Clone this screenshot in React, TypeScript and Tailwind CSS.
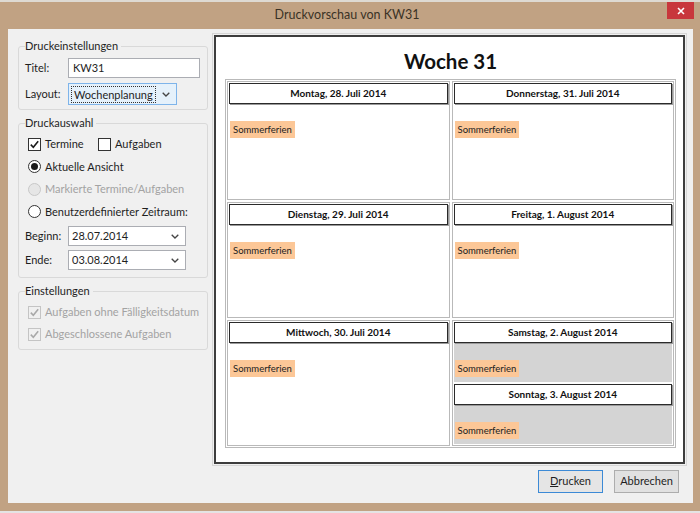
import React from 'react';

const ui = "font-['Lato',sans-serif]";
const doc = "font-['Lato',sans-serif]";

function Chevron() {
  return (
    <svg width="8" height="5" viewBox="0 0 8 5">
      <path d="M0.7 0.7 L4 4 L7.3 0.7" stroke="#444" strokeWidth="1.3" fill="none" />
    </svg>
  );
}

function Check({ checked = false, disabled = false }: { checked?: boolean; disabled?: boolean }) {
  return (
    <span
      className={`flex h-[13px] w-[13px] shrink-0 items-center justify-center border ${
        disabled ? 'border-[#c4c4c4] bg-[#f0f0f0]' : 'border-[#333] bg-white'
      }`}
    >
      {checked && (
        <svg width="11" height="11" viewBox="0 0 11 11">
          <path
            d="M1.8 5.6 L4.3 8.2 L9.2 2.2"
            stroke={disabled ? '#a8a8a8' : '#1a1a1a'}
            strokeWidth="1.6"
            fill="none"
          />
        </svg>
      )}
    </span>
  );
}

function Radio({ checked = false, disabled = false }: { checked?: boolean; disabled?: boolean }) {
  return (
    <span
      className={`flex h-[13px] w-[13px] shrink-0 items-center justify-center rounded-full border ${
        disabled ? 'border-[#c8c8c8] bg-[#e6e6e6]' : 'border-[#333] bg-white'
      }`}
    >
      {checked && <span className="h-[7px] w-[7px] rounded-full bg-[#1a1a1a]" />}
    </span>
  );
}

function DateBox({ label, value }: { label: string; value: string }) {
  return (
    <div className="flex items-center whitespace-nowrap">
      <span className="w-[43px]">{label}</span>
      <div className="flex h-[20px] w-[118px] items-center justify-between border border-[#abadb3] bg-white pl-[3px] pr-[6px]">
        <span>{value}</span>
        <Chevron />
      </div>
    </div>
  );
}

function Tag() {
  return (
    <div className={`${doc} ml-[1px] w-fit bg-[#fcc797] px-[3px] text-[9.5px] leading-[17px] text-[#222]`}>
      Sommerferien
    </div>
  );
}

function DayHead({ text }: { text: string }) {
  return (
    <div
      className={`${doc} flex h-[21px] shrink-0 items-center justify-center border border-[#2a2a2a] bg-white text-[10px] font-bold text-[#111] shadow-[1px_1px_0_#9a9a9a]`}
    >
      {text}
    </div>
  );
}

function Day({ text }: { text: string }) {
  return (
    <div className="flex flex-col border border-[#b9b9b9] p-px">
      <DayHead text={text} />
      <div className="mt-[17px]">
        <Tag />
      </div>
    </div>
  );
}

const days = [
  'Montag, 28. Juli 2014',
  'Donnerstag, 31. Juli 2014',
  'Dienstag, 29. Juli 2014',
  'Freitag, 1. August 2014',
  'Mittwoch, 30. Juli 2014',
];

export default function App() {
  return (
    <div className={`${ui} flex h-[513px] w-[700px] flex-col bg-[#c1a283] text-[11px] text-[#1e1e1e]`}>
      <div className="h-[2px] bg-[#dedad3]" />
      {/* title bar */}
      <div className="flex h-[27px] items-start">
        <div className="flex-1" />
        <div className="pt-[4px] text-[12.5px] leading-[18px] text-[#3a3226]">Druckvorschau von KW31</div>
        <div className="flex flex-1 justify-end pr-[6px]">
          <div className="flex h-[17px] w-[27px] items-center justify-center bg-[#c8373c]">
            <svg width="8" height="8" viewBox="0 0 8 8">
              <path d="M1 1 L7 7 M7 1 L1 7" stroke="#fff" strokeWidth="1.6" />
            </svg>
          </div>
        </div>
      </div>

      {/* client area */}
      <div className="ml-[8px] mr-[7px] flex h-[474px] flex-col bg-[#f0f0f0]">
        <div className="flex items-start pt-[4px]">
          {/* left settings column */}
          <div className="flex w-[204px] shrink-0 flex-col gap-[5px] whitespace-nowrap pl-[10px] pr-[4px] pt-[5px]">
            <fieldset className="rounded-[3px] border border-[#d9d9d9] px-[6px] pb-[4px]">
              <legend className="pr-[3px] leading-[16px]">Druckeinstellungen</legend>
              <div className="mt-[4px] flex items-center">
                <span className="w-[43px]">Titel:</span>
                <div className="flex h-[20px] w-[132px] items-center border border-[#abadb3] bg-white pl-[4px]">
                  KW31
                </div>
              </div>
              <div className="mt-[5px] flex items-center">
                <span className="w-[43px]">Layout:</span>
                <div className="flex h-[22px] w-[109px] items-center justify-between border border-[#7eb4ea] bg-[#e5f1fb] pl-[2px] pr-[6px]">
                  <span className="border border-dotted border-[#333] px-[2px] leading-[15px]">Wochenplanung</span>
                  <Chevron />
                </div>
              </div>
            </fieldset>

            <fieldset className="rounded-[3px] border border-[#d9d9d9] px-[6px] pb-[7px]">
              <legend className="pr-[3px] leading-[16px]">Druckauswahl</legend>
              <div className="mt-[2px] flex h-[22.5px] items-center pl-[3px]">
                <div className="flex w-[70px] items-center gap-[4px]">
                  <Check checked />
                  <span>Termine</span>
                </div>
                <div className="flex items-center gap-[4px]">
                  <Check />
                  <span>Aufgaben</span>
                </div>
              </div>
              <div className="flex h-[22.5px] items-center gap-[4px] pl-[3px]">
                <Radio checked />
                <span>Aktuelle Ansicht</span>
              </div>
              <div className="flex h-[22.5px] items-center gap-[4px] pl-[3px] text-[#a3a3a3]">
                <Radio disabled />
                <span>Markierte Termine/Aufgaben</span>
              </div>
              <div className="flex h-[22.5px] items-center gap-[4px] pl-[3px]">
                <Radio />
                <span>Benutzerdefinierter Zeitraum:</span>
              </div>
              <div className="mt-[3px]">
                <DateBox label="Beginn:" value="28.07.2014" />
              </div>
              <div className="mt-[4px]">
                <DateBox label="Ende:" value="03.08.2014" />
              </div>
            </fieldset>

            <fieldset className="rounded-[3px] border border-[#d9d9d9] px-[6px] pb-[4px]">
              <legend className="pr-[3px] leading-[16px]">Einstellungen</legend>
              <div className="mt-[2px] flex h-[22px] items-center gap-[4px] pl-[3px] text-[#a3a3a3]">
                <Check checked disabled />
                <span>Aufgaben ohne Fälligkeitsdatum</span>
              </div>
              <div className="flex h-[22px] items-center gap-[4px] pl-[3px] text-[#a3a3a3]">
                <Check checked disabled />
                <span>Abgeschlossene Aufgaben</span>
              </div>
            </fieldset>
          </div>

          {/* preview */}
          <div className="mr-[6px] flex-1 border border-[#d6d6d6] p-px">
            <div className="border-2 border-[#3d3d3d] bg-white pb-[14px] pl-[9px] pr-[7px]">
              <div className={`${doc} pt-[12px] text-center text-[20.5px] font-bold leading-[24px] text-[#111]`}>
                Woche 31
              </div>
              <div className="mt-[6px] grid grid-cols-2 grid-rows-[119px_116px_126px] gap-[2px] border border-[#b9b9b9] p-px">
                {days.map((d) => (
                  <Day key={d} text={d} />
                ))}
                <div className="flex flex-col gap-[2px] border border-[#b9b9b9] p-px">
                  <div className="flex flex-1 flex-col bg-[#d4d4d4]">
                    <DayHead text="Samstag, 2. August 2014" />
                    <div className="mt-[17px]">
                      <Tag />
                    </div>
                  </div>
                  <div className="flex flex-1 flex-col bg-[#d4d4d4]">
                    <DayHead text="Sonntag, 3. August 2014" />
                    <div className="mt-[17px]">
                      <Tag />
                    </div>
                  </div>
                </div>
              </div>
            </div>
          </div>
        </div>

        {/* buttons */}
        <div className="mt-[4px] flex justify-end gap-[11px] pr-[14px]">
          <button className="flex h-[23px] w-[65px] items-center justify-center border border-[#3c8ad6] bg-[#e5e5e5]">
            <span>
              <span className="underline">D</span>rucken
            </span>
          </button>
          <button className="flex h-[23px] w-[65px] items-center justify-center border border-[#adadad] bg-[#e1e1e1]">
            Abbrechen
          </button>
        </div>
      </div>
      <div className="mt-auto h-[2px] bg-[#e4e4e4]" />
    </div>
  );
}
